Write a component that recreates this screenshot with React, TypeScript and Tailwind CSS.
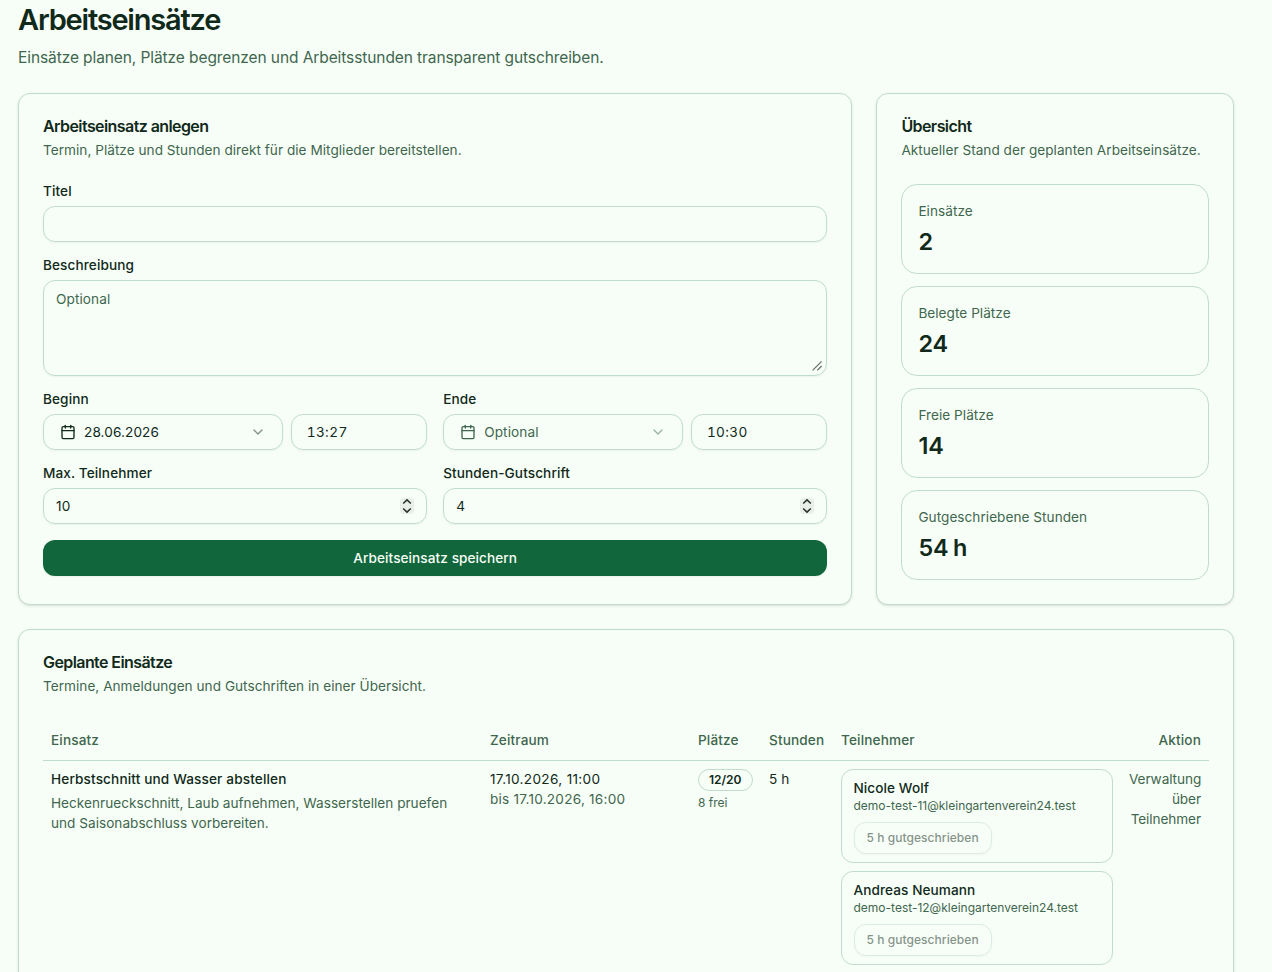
import type { ReactNode } from 'react'
import { Calendar, ChevronDown } from 'lucide-react'
import { clsx } from 'clsx'

interface Participant {
  name: string
  email: string
  credited: string
}

const stats = [
  { label: 'Einsätze', value: '2' },
  { label: 'Belegte Plätze', value: '24' },
  { label: 'Freie Plätze', value: '14' },
  { label: 'Gutgeschriebene Stunden', value: '54 h' },
]

const participants: Participant[] = [
  {
    name: 'Nicole Wolf',
    email: 'demo-test-11@kleingartenverein24.test',
    credited: '5 h gutgeschrieben',
  },
  {
    name: 'Andreas Neumann',
    email: 'demo-test-12@kleingartenverein24.test',
    credited: '5 h gutgeschrieben',
  },
]

const control =
  'h-9 w-full rounded-xl border border-[#c1dccc] bg-transparent text-[13.6px]/5 tracking-[0.1px] shadow-xs outline-none'

function Card({ className, children }: { className?: string; children: ReactNode }) {
  return (
    <section
      className={clsx('rounded-xl border border-[#c1dccc] bg-[#f7fef7] p-6 shadow-sm', className)}
    >
      {children}
    </section>
  )
}

function CardHeader({ title, description }: { title: string; description: string }) {
  return (
    <div className="mb-6 flex flex-col gap-1.5">
      <h2 className="text-base leading-none font-semibold tracking-[-0.58px]">{title}</h2>
      <p className="text-[13.6px]/5 tracking-[0.03px] whitespace-nowrap text-[#3f664e]">
        {description}
      </p>
    </div>
  )
}

function Field({ label, children }: { label: string; children: ReactNode }) {
  return (
    <div className="flex flex-col gap-2">
      <span className="text-[13.6px]/[14px] font-medium tracking-[0.1px]">{label}</span>
      {children}
    </div>
  )
}

function DateTimeField({ date, time }: { date?: string; time: string }) {
  return (
    <div className="flex gap-2">
      <button
        type="button"
        className={clsx(control, 'flex flex-1 items-center gap-2 px-4', !date && 'text-[#3f664e]')}
      >
        <Calendar className="size-4" />
        <span>{date ?? 'Optional'}</span>
        <ChevronDown className="ml-auto size-4 opacity-50" />
      </button>
      <div className="w-34">
        <input
          type="text"
          defaultValue={time}
          className={clsx(control, 'px-[14.5px] tracking-[0.4px] tabular-nums')}
        />
      </div>
    </div>
  )
}

function NumberInput({ value }: { value: string }) {
  return (
    <div className={clsx(control, 'flex items-center justify-between px-3')}>
      <input type="text" defaultValue={value} className="w-40 bg-transparent outline-none" />
      <svg width="14" height="16" viewBox="0 0 14 16" fill="none">
        <rect width="14" height="16" rx="4" fill="#e9eee9" />
        <path
          d="M3.2 5.5 7 1.9l3.8 3.6M3.2 10.5 7 14.1l3.8-3.6"
          stroke="#2b302d"
          strokeWidth="1.5"
        />
      </svg>
    </div>
  )
}

function ParticipantCard({ participant }: { participant: Participant }) {
  return (
    <div className="rounded-xl border border-[#c1dccc] px-[11.5px] py-2">
      <p className="font-medium tracking-[0.08px]">{participant.name}</p>
      <p className="text-xs text-[#3f664e]">{participant.email}</p>
      <button
        type="button"
        disabled
        className="mt-2 flex h-8 items-center rounded-xl border border-[#c1dccc] px-3 text-xs font-medium tracking-[0.05px] opacity-50 shadow-xs"
      >
        {participant.credited}
      </button>
    </div>
  )
}

export default function App() {
  return (
    <main className="h-[972px] overflow-hidden bg-[#f7fef7] pt-0.5 pr-[38px] pl-[18px] font-['Inter',sans-serif] text-[#10291a]">
      <header>
        <h1 className="text-[29px]/9 font-semibold tracking-[-1.2px]">Arbeitseinsätze</h1>
        <p className="mt-2 text-[15.5px]/6 tracking-[-0.09px] text-[#3f664e]">
          Einsätze planen, Plätze begrenzen und Arbeitsstunden transparent gutschreiben.
        </p>
      </header>

      <div className="mt-[23px] grid grid-cols-[1.4fr_0.6fr] gap-6">
        <Card>
          <CardHeader
            title="Arbeitseinsatz anlegen"
            description="Termin, Plätze und Stunden direkt für die Mitglieder bereitstellen."
          />
          <form className="grid gap-4">
            <Field label="Titel">
              <input type="text" className={clsx(control, 'px-3')} />
            </Field>
            <Field label="Beschreibung">
              <div className="relative h-24">
                <textarea
                  placeholder="Optional"
                  className="block h-full w-full resize-none rounded-xl border border-[#c1dccc] bg-transparent px-3 py-2 text-[13.6px]/5 tracking-[0.1px] shadow-xs outline-none placeholder:text-[#3f664e]"
                />
                <svg
                  className="absolute right-1 bottom-[5px]"
                  width="11"
                  height="11"
                  viewBox="0 0 11 11"
                  stroke="#6c716e"
                  strokeWidth="1.3"
                >
                  <path d="M0.6 10.4 9.6 1.4M5.2 10.4 9.6 6" />
                </svg>
              </div>
            </Field>
            <div className="grid grid-cols-2 gap-4">
              <Field label="Beginn">
                <DateTimeField date="28.06.2026" time="13:27" />
              </Field>
              <Field label="Ende">
                <DateTimeField time="10:30" />
              </Field>
              <Field label="Max. Teilnehmer">
                <NumberInput value="10" />
              </Field>
              <Field label="Stunden-Gutschrift">
                <NumberInput value="4" />
              </Field>
            </div>
            <button
              type="button"
              className="h-9 rounded-xl bg-[#11663b] text-[13.6px]/5 font-medium tracking-[0.08px] text-[#f7fef7] shadow-xs"
            >
              Arbeitseinsatz speichern
            </button>
          </form>
        </Card>

        <Card>
          <CardHeader
            title="Übersicht"
            description="Aktueller Stand der geplanten Arbeitseinsätze."
          />
          <div className="grid gap-3">
            {stats.map((stat) => (
              <div key={stat.label} className="rounded-2xl border border-[#c1dccc] p-4">
                <p className="text-[13.6px]/5 tracking-[0.04px] text-[#3f664e]">{stat.label}</p>
                <p className="pt-[5px] text-[23.4px]/[31px] font-semibold [word-spacing:-1.5px]">
                  {stat.value}
                </p>
              </div>
            ))}
          </div>
        </Card>
      </div>

      <Card className="mt-6">
        <CardHeader
          title="Geplante Einsätze"
          description="Termine, Anmeldungen und Gutschriften in einer Übersicht."
        />
        <table className="w-full table-fixed text-[13.6px]/5">
          <colgroup>
            <col className="w-[439px]" />
            <col className="w-[208px]" />
            <col className="w-[71px]" />
            <col className="w-[72px]" />
            <col className="w-[288px]" />
            <col className="w-[88px]" />
          </colgroup>
          <thead>
            <tr className="h-10 border-b border-[#c1dccc] text-left tracking-[0.14px] text-[#3f664e]">
              <th className="px-2 font-medium">Einsatz</th>
              <th className="px-2 font-medium">Zeitraum</th>
              <th className="px-2 font-medium">Plätze</th>
              <th className="px-2 font-medium">Stunden</th>
              <th className="px-2 font-medium">Teilnehmer</th>
              <th className="px-2 text-right font-medium">Aktion</th>
            </tr>
          </thead>
          <tbody>
            <tr className="align-top">
              <td className="p-2">
                <p className="font-medium tracking-[0.14px]">Herbstschnitt und Wasser abstellen</p>
                <p className="mt-1 tracking-[0.02px] text-[#3f664e]">
                  Heckenrueckschnitt, Laub aufnehmen, Wasserstellen pruefen und Saisonabschluss
                  vorbereiten.
                </p>
              </td>
              <td className="p-2">
                <p className="tracking-[0.32px]">17.10.2026, 11:00</p>
                <p className="tracking-[0.23px] text-[#3f664e]">bis 17.10.2026, 16:00</p>
              </td>
              <td className="p-2">
                <span className="flex w-fit rounded-full border border-[#c1dccc] px-2.5 py-0.5 text-xs font-semibold">
                  12/20
                </span>
                <p className="mt-1 text-xs text-[#3f664e]">8 frei</p>
              </td>
              <td className="p-2 tracking-[0.14px]">5 h</td>
              <td className="p-2">
                <div className="flex flex-col gap-2">
                  {participants.map((participant) => (
                    <ParticipantCard key={participant.email} participant={participant} />
                  ))}
                </div>
              </td>
              <td className="p-2 text-right tracking-[-0.08px] text-[#3f664e]">
                Verwaltung über Teilnehmer
              </td>
            </tr>
          </tbody>
        </table>
      </Card>
    </main>
  )
}
